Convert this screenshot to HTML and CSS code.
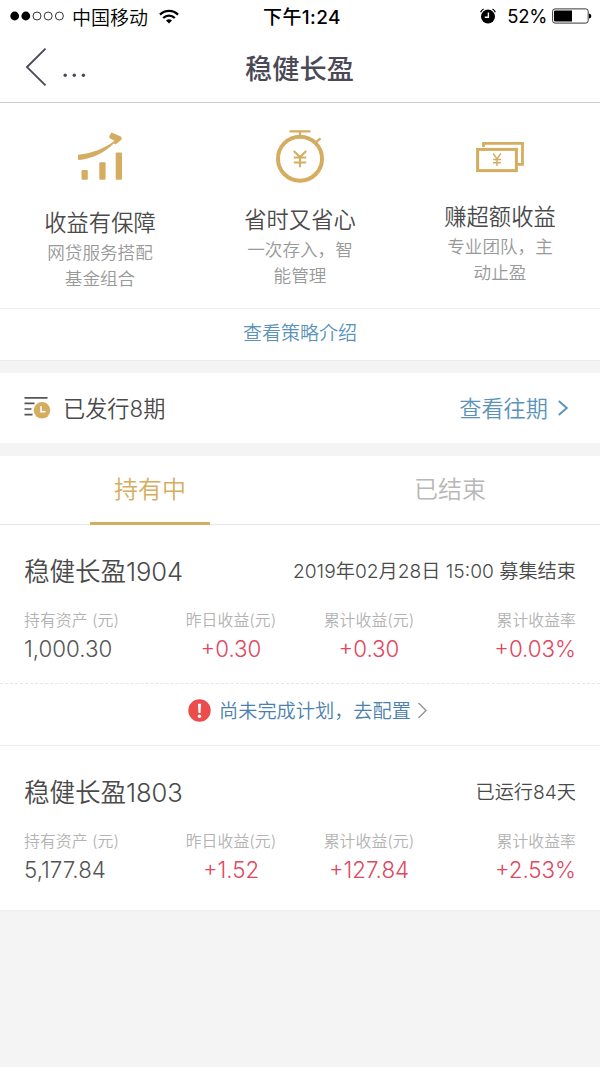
FILE: index.html
```html
<!DOCTYPE html>
<html lang="zh-CN">
<head>
  <meta charset="UTF-8">
  <meta name="viewport" content="width=device-width, initial-scale=1.0">
  <title>稳健长盈</title>
  <link rel="stylesheet" href="styles.css">
</head>
<body>
  <div class="status">
    <div class="status-left">
      <svg width="54" height="10" viewBox="0 0 54 10" fill="none" stroke="#000">
        <circle cx="4.7" cy="5" r="4.4" fill="#000" stroke="none"/>
        <circle cx="15.8" cy="5" r="4.4" fill="#000" stroke="none"/>
        <circle cx="27" cy="5" r="4" stroke-width=".8"/>
        <circle cx="38.2" cy="5" r="4" stroke-width=".8"/>
        <circle cx="49.4" cy="5" r="4" stroke-width=".8"/>
      </svg>
      <span class="carrier">中国移动</span>
      <svg width="20" height="15" viewBox="0 0 20 15" fill="none" stroke="#000" stroke-width="2.3">
        <path d="M1 5.6a12.8 12.8 0 0 1 18 0"/>
        <path d="M4.2 9a8.2 8.2 0 0 1 11.6 0"/>
        <path d="M10 14.6l-3-3a4.3 4.3 0 0 1 6 0z" fill="#000" stroke="none"/>
      </svg>
    </div>
    <div class="status-time">下午1:24</div>
    <div class="status-right">
      <svg width="16" height="16" viewBox="0 0 16 16">
        <circle cx="8" cy="8.6" r="7" fill="#000"/>
        <path d="M.6 4.2A6 6 0 0 1 3.6 1M15.4 4.2a6 6 0 0 0-3-3.2" fill="none" stroke="#000" stroke-width="1.2"/>
        <path d="M8.4 4.6v4.6H4.8" fill="none" stroke="#fff" stroke-width="1.4"/>
      </svg>
      <span class="percent">52%</span>
      <svg width="40" height="16" viewBox="0 0 40 16">
        <rect x=".6" y=".9" width="35.6" height="14.2" rx="2.4" fill="#fff" stroke="#222" stroke-width=".9"/>
        <path d="M3.4 2.4H20v11.2H3.4a1.4 1.4 0 0 1-1.4-1.4V3.8a1.4 1.4 0 0 1 1.4-1.4z"/>
        <path d="M37 5.4q2.4.6 2.4 2.6T37 10.6z"/>
      </svg>
    </div>
  </div>

  <header class="nav">
    <a class="back">
      <svg width="22" height="40" viewBox="0 0 22 40" fill="none" stroke="#4a4955" stroke-width="1.9">
        <path d="M20.5 1.700L2 20.100L20.5 38.400"/>
      </svg>
      <svg width="24" height="5" viewBox="0 0 24 5" fill="#4a4955">
        <circle cx="2.2" cy="2.200" r="1.7"/>
        <circle cx="11.3" cy="2.200" r="1.7"/>
        <circle cx="20.4" cy="2.200" r="1.7"/>
      </svg>
    </a>
    <h1>稳健长盈</h1>
  </header>

  <section class="features">
    <div class="feature">
      <svg class="icon-chart" width="50" height="52" viewBox="0 0 50 52" fill="#d5ad60">
        <path d="M36.5 2.6L45.8 6.6Q47.6 7.8 46.2 10L40.800 14.200Q39.500 14.500 39 13.300C30 22.500 18 28.500 4.200 30Q3 30 3 28.800V24.800C18 23.300 30 18.200 39.500 10.800L34.800 8.200Q33.800 7.400 34.400 6z"/>
        <rect x="6.5" y="40" width="6.3" height="9.7" rx="1"/>
        <rect x="24.3" y="32.2" width="6.3" height="17.5" rx="1"/>
        <rect x="40.7" y="22.4" width="6.3" height="27.3" rx="1"/>
      </svg>
      <h2>收益有保障</h2>
      <p>网贷服务搭配<br>基金组合</p>
    </div>
    <div class="feature">
      <svg class="icon-watch" width="50" height="54" viewBox="0 0 50 54" fill="none" stroke="#d5ad60">
        <circle cx="25" cy="29.700" r="22" stroke-width="4"/>
        <path d="M14.5 2.4h21M25 2v6" stroke-width="2.3"/>
        <path d="M39.8 14.2l5.8-4.8" stroke-width="2.3"/>
        <path d="M18.8 22L25 28l6.2-6M18.8 28.5h12.400M18.8 33.5h12.400M25 28v10.300" stroke-width="2.1"/>
      </svg>
      <h2>省时又省心</h2>
      <p>一次存入，智<br>能管理</p>
    </div>
    <div class="feature">
      <svg class="icon-cash" width="50" height="34" viewBox="0 0 50 34" fill="none" stroke="#d5ad60">
        <path d="M8.5 7V3.4H47.5V24.4H42" stroke-width="2.8"/>
        <rect x="2.6" y="9.4" width="38.8" height="21.2" stroke-width="3"/>
        <path d="M18.2 13.5L22 19l3.8-5.5M18 19.5h8M18 22.7h8M22 19v7" stroke-width="1.5"/>
      </svg>
      <h2>赚超额收益</h2>
      <p>专业团队，主<br>动止盈</p>
    </div>
  </section>
  <a class="strategy">查看策略介绍</a>

  <section class="issued">
    <svg width="28" height="24" viewBox="0 0 28 24" fill="none" stroke="#555" stroke-width="1.7">
      <path d="M.5 1.9H23.5M.5 7.4h10M.5 13h7M.5 18.6h8"/>
      <circle cx="18" cy="14.3" r="8.3" fill="#d5ad60" stroke="none"/>
      <path d="M17 10v5.8h4.5" stroke="#fff" stroke-width="1.6"/>
    </svg>
    <span class="issued-text">已发行8期</span>
    <a class="history"><span>查看往期</span>
      <svg width="12" height="16" viewBox="0 0 12 16" fill="none" stroke="#5b93b8" stroke-width="1.9">
        <path d="M1.8 1l8 7l-8 7"/>
      </svg>
    </a>
  </section>

  <nav class="tabs">
    <a class="tab active">持有中</a>
    <a class="tab">已结束</a>
  </nav>

  <article class="product">
    <div class="product-head">
      <h3>稳健长盈1904</h3>
      <span>2019年02月28日 15:00 募集结束</span>
    </div>
    <div class="stats">
      <div class="stat"><small>持有资产 (元)</small><b>1,000.30</b></div>
      <div class="stat"><small>昨日收益(元)</small><b>+0.30</b></div>
      <div class="stat"><small>累计收益(元)</small><b>+0.30</b></div>
      <div class="stat"><small>累计收益率</small><b>+0.03%</b></div>
    </div>
  </article>
  <a class="notice">
    <svg width="23" height="23" viewBox="0 0 23 23">
      <circle cx="11.5" cy="11.5" r="11.2" fill="#eb4c4c"/>
      <path d="M9.9 4.8h3.2l-.6 9.2h-2z" fill="#fff"/>
      <circle cx="11.5" cy="17.2" r="1.7" fill="#fff"/>
    </svg>
    <span>尚未完成计划，去配置</span>
    <svg width="11" height="17" viewBox="0 0 11 17" fill="none" stroke="#999" stroke-width="1.5">
      <path d="M1.5 1l7.5 7.5l-7.5 7.5"/>
    </svg>
  </a>

  <article class="product last">
    <div class="product-head">
      <h3>稳健长盈1803</h3>
      <span>已运行84天</span>
    </div>
    <div class="stats">
      <div class="stat"><small>持有资产 (元)</small><b>5,177.84</b></div>
      <div class="stat"><small>昨日收益(元)</small><b>+1.52</b></div>
      <div class="stat"><small>累计收益(元)</small><b>+127.84</b></div>
      <div class="stat"><small>累计收益率</small><b>+2.53%</b></div>
    </div>
  </article>
</body>
</html>
```
FILE: styles.css
```css
* {
  box-sizing: border-box;
  margin: 0;
  padding: 0;
}
body {
  height: 1067px;
  overflow: hidden;
  background: #f4f4f4;
  color: #4a4a4a;
  font-family: Inter, "Noto Sans CJK SC", sans-serif;
  font-weight: 350;
}
svg {
  display: block;
  flex: none;
}

/* status bar */
.status {
  display: grid;
  grid-template-columns: 1fr auto 1fr;
  align-items: center;
  height: 33px;
  padding: 0 8px 1px 10px;
  background: #fff;
  color: #000;
  font-size: 19px;
  font-weight: 400;
}
.status-left, .status-right {
  display: flex;
  align-items: center;
}
.carrier {
  margin: 0 11px 0 8px;
  font-weight: 350;
}
.status-time {
  padding: 0 0 2px 2px;
  font-weight: 500;
  letter-spacing: 0.4px;
}
.status-right {
  justify-content: flex-end;
}
.percent {
  margin: 0 5px 0 11px;
  font-size: 18.5px;
  font-weight: 400;
  letter-spacing: -0.3px;
}

/* title bar */
.nav {
  display: grid;
  grid-template-columns: 1fr auto 1fr;
  align-items: center;
  height: 70px;
  padding: 0 26px 2px 25px;
  background: #fff;
  border-bottom: 1px solid #ccc;
}
.back {
  display: flex;
  align-items: flex-end;
  gap: 16px;
}
.back svg + svg {
  margin-bottom: 9px;
}
.nav h1 {
  color: #4a4955;
  font-size: 27.2px;
  font-weight: 500;
}

/* selling points */
.features {
  display: grid;
  grid-template-columns: repeat(3, 1fr);
  height: 206px;
  padding-top: 27px;
  background: #fff;
  border-bottom: 1px solid #ececec;
}
.feature {
  display: flex;
  flex-direction: column;
  align-items: center;
}
.icon-chart {
  margin-bottom: 25px;
}
.icon-watch {
  margin: -1px 0 21px;
}
.icon-cash {
  margin: 10px 0 27px;
}
.feature h2 {
  font-size: 22.3px;
  font-weight: 350;
  line-height: 32px;
}
.feature p {
  padding-top: 1px;
  color: #999;
  font-size: 17.6px;
  line-height: 26px;
  text-align: center;
}
.strategy {
  display: block;
  height: 52px;
  background: #fff;
  border-bottom: 1px solid #ececec;
  color: #5b93b8;
  font-size: 19px;
  line-height: 50px;
  text-align: center;
}

/* issued row */
.issued {
  display: flex;
  align-items: center;
  height: 70px;
  margin: 12px 0 13px;
  padding: 0 31px 0 24px;
  background: #fff;
  font-size: 22.2px;
}
.issued-text {
  margin-left: 11px;
  padding-bottom: 3px;
}
.history {
  display: flex;
  align-items: center;
  gap: 9px;
  margin-left: auto;
  color: #5b93b8;
}
.history span {
  padding-bottom: 3px;
}

/* tabs */
.tabs {
  display: flex;
  height: 69px;
  background: #fff;
  border-bottom: 1px solid #e6e6e6;
}
.tab {
  display: flex;
  flex-direction: column;
  align-items: center;
  width: 50%;
  height: 69px;
  padding-top: 2px;
  color: #b8b8b8;
  font-size: 24px;
  line-height: 64px;
}
.tab.active {
  color: #d5ad60;
}
.tab.active::after {
  content: "";
  width: 120px;
  height: 3px;
  background: #d5ad60;
}

/* products */
.product {
  height: 159px;
  padding: 25px 24px 0;
  background: #fff;
  border-bottom: 1px dashed #e6e6e6;
}
.product.last {
  height: 165px;
  border-bottom: 1px solid #ececec;
}
.product-head {
  display: flex;
  align-items: center;
  justify-content: space-between;
  height: 38px;
}
.product-head h3 {
  font-size: 25.6px;
  font-weight: 350;
  letter-spacing: -0.1px;
}
.product-head span {
  padding-top: 1px;
  font-size: 19.2px;
}
.stats {
  display: grid;
  grid-template-columns: 138px 138px 138px 138px;
  margin-top: 20px;
}
.stat {
  display: flex;
  flex-direction: column;
  align-items: center;
  color: #e0475f;
}
.stat:first-child {
  align-items: flex-start;
  color: #555;
}
.stat:last-child {
  align-items: flex-end;
}
.stat small {
  color: #b3b3b3;
  font-size: 15.9px;
  line-height: 25px;
}
.stat b {
  font-size: 22.3px;
  font-weight: 300;
  line-height: 32px;
}
.notice {
  display: flex;
  align-items: center;
  justify-content: center;
  height: 62px;
  padding: 0 0 8px 16px;
  background: #fff;
  border-bottom: 1px solid #ececec;
  color: #4c80ae;
  font-size: 19.2px;
}
.notice span {
  margin: 0 6px 0 8px;
  padding-bottom: 2px;
}
```
